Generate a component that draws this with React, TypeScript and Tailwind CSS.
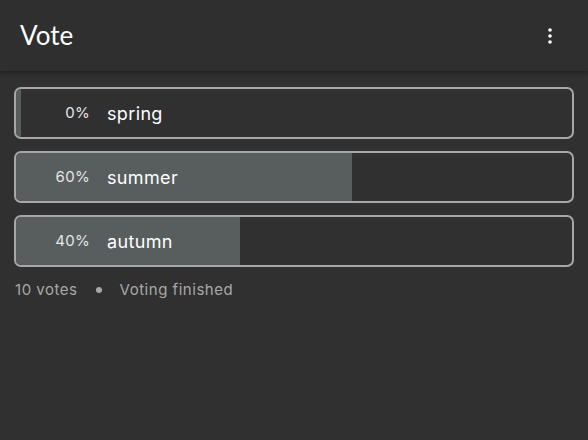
import React from "react";

const options = [
  { label: "spring", pct: 0 },
  { label: "summer", pct: 60 },
  { label: "autumn", pct: 40 },
];

export default function App() {
  return (
    <div className="w-[588px] h-[440px] bg-[#303030] text-white flex flex-col" style={{ fontFamily: "Inter, 'Open Sans', sans-serif" }}>
      <div className="h-[71px] flex items-center justify-between pl-[20px] pr-[36px] bg-[#2f2f2f] shadow-[0_2px_4px_rgba(0,0,0,0.35)] relative">
        <div className="text-[26px] leading-none text-white pb-[2px]" style={{ fontFamily: "Lato, sans-serif" }}>Vote</div>
        <svg width="4" height="16" viewBox="0 0 4 16" className="text-white">
          <circle cx="2" cy="2" r="1.8" fill="currentColor" />
          <circle cx="2" cy="8" r="1.8" fill="currentColor" />
          <circle cx="2" cy="14" r="1.8" fill="currentColor" />
        </svg>
      </div>
      <div className="flex flex-col gap-[12px] px-[14px] pt-[16px]">
        {options.map((o) => (
          <div key={o.label} className="relative h-[52px] rounded-[7px] border-2 border-[#a7a7a7] overflow-hidden bg-[#303030]">
            <div className="absolute left-0 top-0 bottom-0 bg-[#585d5d]" style={{ width: o.pct === 0 ? "5px" : `calc(${o.pct}% + 2px)` }} />
            <div className="relative flex items-center h-full pt-[1px]">
              <div className="w-[74px] text-right text-[15px] tracking-[0.02em] text-[#e6e6e6]">{o.pct}%</div>
              <div className="ml-[17px] text-[18px] tracking-[0.02em] text-white">{o.label}</div>
            </div>
          </div>
        ))}
      </div>
      <div className="flex items-center px-[15px] pt-[12px] text-[15px] tracking-[0.035em] text-[#a8a8a8]">
        <span>10 votes</span>
        <span className="mx-[18px] w-[6px] h-[6px] rounded-full bg-[#a8a8a8]" />
        <span>Voting finished</span>
      </div>
    </div>
  );
}
